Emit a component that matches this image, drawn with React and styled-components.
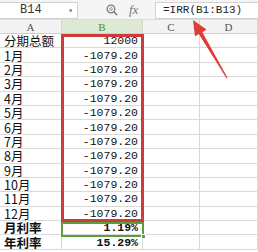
import styled, { createGlobalStyle } from 'styled-components';

const GlobalStyle = createGlobalStyle`
  html, body { margin: 0; padding: 0; background: #ffffff; }
  * { box-sizing: border-box; }
`;

const rows = [
  { label: '分期总额', value: '12000' },
  ...Array.from({ length: 12 }, (_, i) => ({ label: `${i + 1}月`, value: '-1079.20' })),
  { label: '月利率', value: '1.19%', bold: true },
  { label: '年利率', value: '15.29%', bold: true },
];

const App = () => {
  return (
    <>
      <GlobalStyle />
      <Frame>
        <FormulaBar>
          <NameBox>
            <span>B14</span>
            <Caret>▾</Caret>
          </NameBox>
          <Tools>
            <svg width="12" height="12" viewBox="0 0 12 12">
              <circle cx="5" cy="5" r="3.8" fill="none" stroke="#7a7a7a" strokeWidth="1.3" />
              <circle cx="5" cy="5" r="1.4" fill="none" stroke="#9a9a9a" strokeWidth="1" />
              <line x1="7.8" y1="7.8" x2="11" y2="11" stroke="#7a7a7a" strokeWidth="1.6" />
            </svg>
            <Fx>fx</Fx>
          </Tools>
          <FormulaInput>=IRR(B1:B13)</FormulaInput>
        </FormulaBar>

        <Sheet>
          <ColHeader>A</ColHeader>
          <ColHeader $active>B</ColHeader>
          <ColHeader>C</ColHeader>
          <ColHeader>D</ColHeader>
          {rows.map((r, i) => (
            <Row key={i}>
              <LabelCell $bold={r.bold}>{r.label}</LabelCell>
              <NumCell $bold={r.bold}>{r.value}</NumCell>
              <Cell />
              <Cell />
            </Row>
          ))}
          <RedFrame />
          <Selection>
            <Handle />
          </Selection>
        </Sheet>

        <Arrow width="258" height="252" viewBox="0 0 258 252">
          <polygon
            points="193,20 206.5,29.5 202.4,32.2 227.5,77.8 226.5,78.2 198.8,34 195,36.6"
            fill="#e23a36"
          />
        </Arrow>
      </Frame>
    </>
  );
};

export default App;

const Frame = styled.div`
  position: relative;
  width: 258px;
  height: 252px;
  overflow: hidden;
  background: #ffffff;
`;

const FormulaBar = styled.div`
  display: flex;
  align-items: center;
  height: 20px;
  background: #f5f5f5;
  border-bottom: 1px solid #dcdcdc;
`;

const NameBox = styled.div`
  display: flex;
  align-items: center;
  justify-content: space-between;
  width: 78px;
  height: 17px;
  margin-top: 1px;
  padding: 0 4px 0 20px;
  background: #ffffff;
  border: 1px solid #d2d2d2;
  border-left: none;
  font-family: 'Liberation Mono', monospace;
  font-size: 12px;
  color: #333;
`;

const Caret = styled.span`
  font-size: 8px;
  color: #666;
`;

const Tools = styled.div`
  display: flex;
  align-items: center;
  gap: 11px;
  width: 77px;
  padding-left: 28px;
`;

const Fx = styled.span`
  font-family: 'Liberation Serif', serif;
  font-style: italic;
  font-size: 13px;
  color: #777;
`;

const FormulaInput = styled.div`
  flex: 1;
  height: 17px;
  margin-top: 1px;
  padding-left: 7px;
  display: flex;
  align-items: center;
  background: #ffffff;
  border: 1px solid #d2d2d2;
  border-right: none;
  font-family: 'Liberation Mono', monospace;
  font-size: 11px;
  color: #222;
`;

const Sheet = styled.div`
  position: relative;
  display: grid;
  grid-template-columns: 62px 81px 57px 58px;
  grid-template-rows: 14px;
  grid-auto-rows: 14.4px;
`;

const ColHeader = styled.div`
  display: flex;
  align-items: center;
  justify-content: center;
  background: ${(p) => (p.$active ? '#dde9d3' : '#f3f3f3')};
  color: ${(p) => (p.$active ? '#4f8f2f' : '#555')};
  border-right: 1px solid #d6d6d6;
  border-bottom: 1px solid #cfcfcf;
  font-family: 'Liberation Serif', serif;
  font-size: 11px;
  line-height: 12px;
`;

const Row = styled.div`
  display: contents;
`;

const Cell = styled.div`
  border-right: 1px solid #d9d9d9;
  border-bottom: 1px solid #d9d9d9;
  display: flex;
  align-items: center;
  overflow: hidden;
  white-space: nowrap;
`;

const LabelCell = styled(Cell)`
  padding-left: 4px;
  font-family: 'Noto Sans CJK SC', sans-serif;
  font-size: 12.5px;
  line-height: 13px;
  font-weight: ${(p) => (p.$bold ? 700 : 400)};
  color: #111;
`;

const NumCell = styled(Cell)`
  justify-content: flex-end;
  padding-right: 4px;
  font-family: 'Liberation Mono', monospace;
  font-size: 11.5px;
  line-height: 13px;
  font-weight: ${(p) => (p.$bold ? 700 : 400)};
  color: #111;
`;

const RedFrame = styled.div`
  position: absolute;
  left: 61px;
  top: 14px;
  width: 83px;
  height: 188px;
  border: 3px solid #cf3b3c;
  pointer-events: none;
`;

const Selection = styled.div`
  position: absolute;
  left: 61px;
  top: 202px;
  width: 83px;
  height: 15px;
  border: 2px solid #5c9e3e;
  pointer-events: none;
`;

const Handle = styled.div`
  position: absolute;
  right: -4px;
  bottom: -4px;
  width: 5px;
  height: 5px;
  background: #5c9e3e;
  border: 1px solid #ffffff;
`;

const Arrow = styled.svg`
  position: absolute;
  left: 0;
  top: 0;
  pointer-events: none;
`;
